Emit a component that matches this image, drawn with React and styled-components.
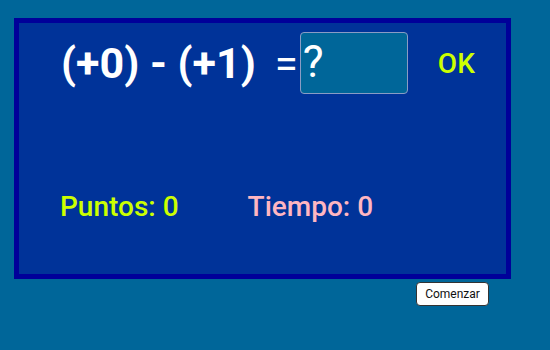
import React from "react";
import styled, { createGlobalStyle } from "styled-components";

const Global = createGlobalStyle`
  html, body { margin: 0; padding: 0; }
  body {
    background: #006699;
    font-family: Roboto, "Liberation Sans", Arial, sans-serif;
  }
`;

const Page = styled.div`
  min-height: 350px;
  padding: 18px 0 0 14px;
  box-sizing: border-box;
  width: 550px;
`;

const Panel = styled.div`
  width: 497px;
  height: 261px;
  box-sizing: border-box;
  background: #003399;
  border: 5px solid #000099;
  display: flex;
  flex-direction: column;
`;

const QuestionRow = styled.div`
  display: flex;
  align-items: center;
  height: 62px;
  margin-top: 9px;
  padding-left: 42px;
`;

const Expression = styled.span`
  color: #ffffff;
  font-size: 43px;
  font-weight: 700;
  white-space: pre;
`;

const Equals = styled.span`
  color: #ffffff;
  font-size: 42px;
  font-weight: 400;
  margin-left: 19px;
  margin-right: 2px;
`;

const AnswerBox = styled.div`
  width: 108px;
  height: 62px;
  box-sizing: border-box;
  border: 1px solid #8a9cc4;
  border-radius: 4px;
  background: #006699;
  color: #ffffff;
  font-size: 44px;
  line-height: 58px;
  padding-left: 2px;
`;

const OkButton = styled.span`
  color: #ccff00;
  font-size: 28px;
  font-weight: 500;
  margin-left: 30px;
`;

const StatsRow = styled.div`
  display: flex;
  margin-top: 96px;
  padding-left: 41px;
  gap: 69px;
`;

const Stat = styled.span`
  color: ${(p) => p.$color};
  font-size: 28px;
  font-weight: 500;
`;

const ActionRow = styled.div`
  width: 497px;
  display: flex;
  justify-content: flex-end;
  padding-right: 22px;
  box-sizing: border-box;
  margin-top: 3px;
`;

const StartButton = styled.button`
  width: 73px;
  height: 24px;
  background: #ffffff;
  border: 1px solid #333333;
  border-radius: 4px;
  font-family: Roboto, "Liberation Sans", Arial, sans-serif;
  font-size: 12px;
  color: #111111;
  padding: 0;
  cursor: pointer;
`;

export default function App() {
  return (
    <Page>
      <Global />
      <Panel>
        <QuestionRow>
          <Expression>(+0) - (+1)</Expression>
          <Equals>=</Equals>
          <AnswerBox>?</AnswerBox>
          <OkButton>OK</OkButton>
        </QuestionRow>
        <StatsRow>
          <Stat $color="#ccff00">Puntos: 0</Stat>
          <Stat $color="#ffb6c1">Tiempo: 0</Stat>
        </StatsRow>
      </Panel>
      <ActionRow>
        <StartButton>Comenzar</StartButton>
      </ActionRow>
    </Page>
  );
}
